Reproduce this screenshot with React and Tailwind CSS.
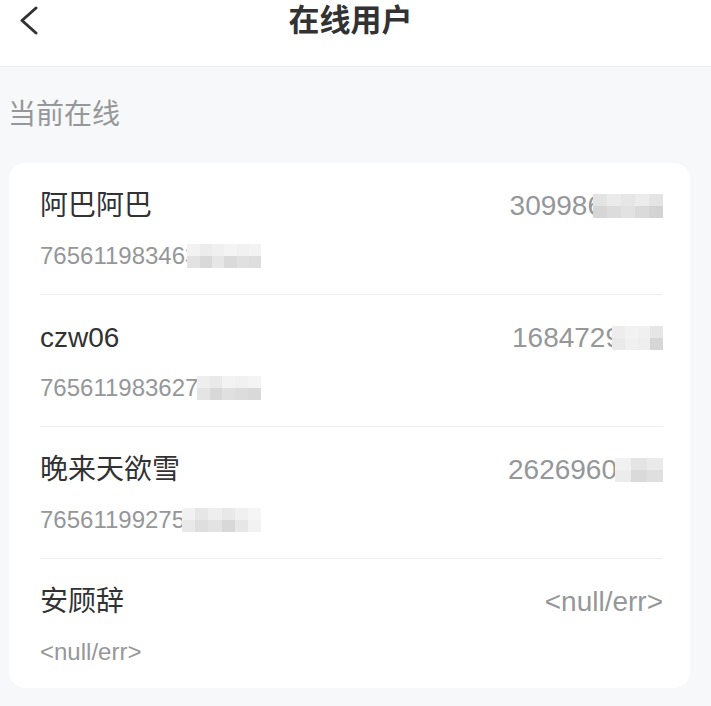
import React from 'react';

const FONT = { fontFamily: '"Liberation Sans", Arial, "Noto Sans CJK SC", sans-serif' };

// pixelated blur patches (two rows of cells)
function Mosaic({ cells, className = '' }) {
  return (
    <span className={`inline-flex flex-col ${className}`}>
      {cells.map((row, i) => (
        <span key={i} className="flex">
          {row.map((c, j) => (
            <span key={j} className={`h-[12px] flex-1 ${c}`} />
          ))}
        </span>
      ))}
    </span>
  );
}

const users = [
  {
    name: '阿巴阿巴',
    value: '309986',
    valueMask: { w: 'w-[70px] -ml-[10px]', cells: [
      ['bg-[#e3e3e3]', 'bg-[#ebebeb]', 'bg-[#e6e6e6]', 'bg-[#ececec]', 'bg-[#e4e4e4]'],
      ['bg-[#d6d6d6]', 'bg-[#dcdcdc]', 'bg-[#e2e2e2]', 'bg-[#dadada]', 'bg-[#d3d3d3]'],
    ] },
    id: '765611983463',
    idMask: { w: 'w-[74px] -ml-[11px]', cells: [
      ['bg-[#f2f2f2]', 'bg-[#ececec]', 'bg-[#f0f0f0]', 'bg-[#f4f4f4]', 'bg-[#f1f1f1]', 'bg-[#f3f3f3]'],
      ['bg-[#e2e2e2]', 'bg-[#d9d9d9]', 'bg-[#e6e6e6]', 'bg-[#dadada]', 'bg-[#e0e0e0]', 'bg-[#dedede]'],
    ] },
  },
  {
    name: 'czw06',
    value: '1684729',
    valueMask: { w: 'w-[51px] -ml-[9px]', cells: [
      ['bg-[#ededed]', 'bg-[#f2f2f2]', 'bg-[#f0f0f0]', 'bg-[#e6e6e6]'],
      ['bg-[#e9e9e9]', 'bg-[#f0f0f0]', 'bg-[#eeeeee]', 'bg-[#d6d6d6]'],
    ] },
    id: '7656119836274',
    idMask: { w: 'w-[64px] -ml-[15px]', cells: [
      ['bg-[#eeeeee]', 'bg-[#e9e9e9]', 'bg-[#f3f3f3]', 'bg-[#f1f1f1]', 'bg-[#f4f4f4]'],
      ['bg-[#e4e4e4]', 'bg-[#d8d8d8]', 'bg-[#e0e0e0]', 'bg-[#dcdcdc]', 'bg-[#d9d9d9]'],
    ] },
  },
  {
    name: '晚来天欲雪',
    value: '2626960',
    valueMask: { w: 'w-[48px] -ml-[2px]', cells: [
      ['bg-[#f1f1f1]', 'bg-[#e4e4e4]', 'bg-[#eaeaea]'],
      ['bg-[#ececec]', 'bg-[#dadada]', 'bg-[#dfdfdf]'],
    ] },
    id: '76561199275',
    idMask: { w: 'w-[79px] -ml-[3px]', cells: [
      ['bg-[#f1f1f1]', 'bg-[#e6e6e6]', 'bg-[#eeeeee]', 'bg-[#e8e8e8]', 'bg-[#f0f0f0]', 'bg-[#f5f5f5]'],
      ['bg-[#e9e9e9]', 'bg-[#dedede]', 'bg-[#e3e3e3]', 'bg-[#d8d8d8]', 'bg-[#e6e6e6]', 'bg-[#f2f2f2]'],
    ] },
  },
  { name: '安顾辞', value: '<null/err>', id: '<null/err>' },
];

export default function App() {
  return (
    <div className="min-h-screen bg-[#f7f8fa]" style={FONT}>
      {/* Header */}
      <div className="h-[67px] bg-white border-b border-[#ebedf0] grid grid-cols-[1fr_auto_1fr] items-start pr-[10px]">
        <button className="h-[42px] w-[60px] flex items-center pl-[19px]">
          <svg width="20" height="30" viewBox="0 0 20 30" fill="none">
            <path d="M17 2 L3 14.5 L17 27" stroke="#323233" strokeWidth="3" strokeLinecap="round" strokeLinejoin="round" />
          </svg>
        </button>
        <h1 className="text-[31px] leading-[42px] font-bold text-[#323233]">在线用户</h1>
        <div />
      </div>

      {/* Section title */}
      <div className="pt-[30px] pl-[8px] text-[28px] leading-[36px] text-[#969799]">当前在线</div>

      {/* List */}
      <div className="mt-[30px] ml-[9px] w-[681px] bg-white rounded-[16px] pl-[31px] pr-[27px]">
        {users.map((u, i) => (
          <div
            key={i}
            className={`pt-[25px] ${i < users.length - 1 ? 'pb-[22px] border-b border-[#ebedf0]' : 'pb-[20px]'}`}
          >
            <div className="flex items-center justify-between h-[36px]">
              <span className="text-[28px] text-[#323233]">{u.name}</span>
              <span className="flex items-center text-[28px] text-[#969799]">
                {u.value}
                {u.valueMask && <Mosaic cells={u.valueMask.cells} className={u.valueMask.w} />}
              </span>
            </div>
            <div className="mt-[16px] h-[32px] flex items-center text-[24px] text-[#969799]">
              {u.id}
              {u.idMask && <Mosaic cells={u.idMask.cells} className={u.idMask.w} />}
            </div>
          </div>
        ))}
      </div>
    </div>
  );
}
